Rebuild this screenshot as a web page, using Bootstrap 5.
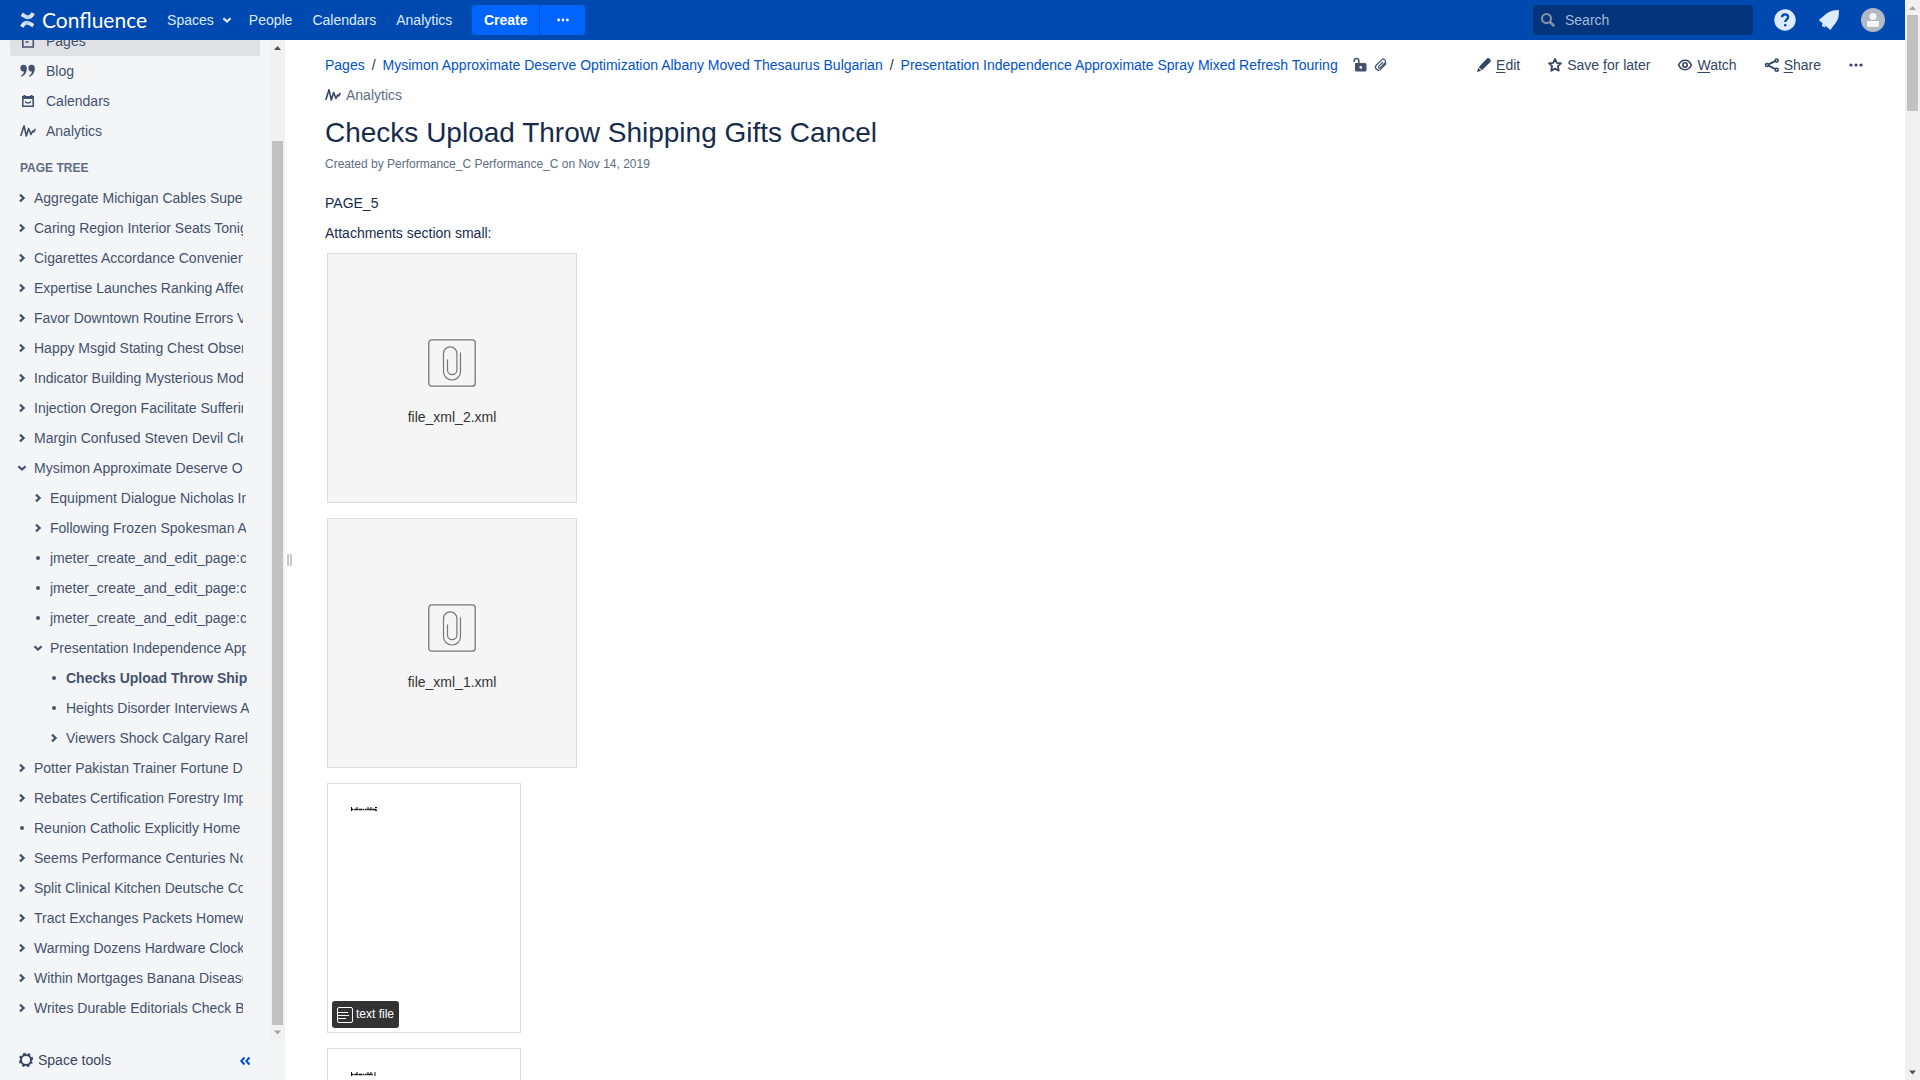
<!DOCTYPE html>
<html lang="en">
<head>
<meta charset="utf-8">
<meta name="viewport" content="width=device-width, initial-scale=1">
<title>Checks Upload Throw Shipping Gifts Cancel - Confluence</title>
<link rel="stylesheet" href="https://cdn.jsdelivr.net/npm/bootstrap@5.3.0/dist/css/bootstrap.min.css">
<style>
body{font-family:"Liberation Sans",Arial,sans-serif;font-size:14px;line-height:20px;color:#172b4d;background:#fff}
a{color:#0052cc;text-decoration:none}
svg{display:block;flex:none}
u{text-underline-offset:2px}
.app-bar{height:40px;background:#0049b0;padding:0 20px;color:#deebff}
.app-bar a{color:#deebff}
.brand{gap:7px}
.brand-name{font-family:Lato,"Open Sans",sans-serif;font-size:21px;line-height:30px;color:#fff}
.app-nav{gap:20px;margin-left:20px}
.app-nav .menu-link{gap:5px;margin-right:-6px}
.app-bar .btn{height:30px;border:0;padding:0 10px;background:#0065ff;color:#fff;font-size:14px;line-height:20px;font-weight:700}
.app-bar .btn-create{width:67px;border-radius:3px 0 0 3px}
.app-bar .btn-more{width:45px;border-radius:0 3px 3px 0}
.search-box{width:220px;height:30px;background:#03347c;border-radius:3px;padding:0 8px;gap:10px;margin-right:20px}
.search-box input{background:none;border:0;outline:0;padding:0;color:#b3c7e6;min-width:0}
.search-box input::placeholder{color:#a5bad9;opacity:1}
.bar-icons{gap:21px}
.icon-btn{background:none;border:0;padding:0;color:inherit}
.side{width:285px;background:#f4f5f7;color:#42526e}
.side a{color:#42526e}
.side-scroll{padding:0 10px 17px}
.side-link{height:30px;padding:0 10px;gap:10px;border-radius:3px}
.side-link.current{background:#dfe1e5}
.tree-title{font-size:12px;line-height:20px;font-weight:700;color:#5e6c84;padding:12px 10px 5px;margin:0}
.tree,.tree ul{list-style:none;margin:0;padding:0}
.tree{padding:0 17px 0 4px}
.tree ul{padding-left:16px;margin-right:-3px}
.tree-row{height:30px;gap:4px}
.tree-row .name{white-space:nowrap;overflow:hidden;flex:1;min-width:0}
.tree-row button{width:16px;height:16px}
.side-foot{height:40px;padding:0 34px 0 18px}
.side .space-tools{gap:4px;color:#344563}
.collapse-btn{color:#0052cc}
.sbar{width:15px;background:#f1f1f1}
.sbar .arrow{height:15px}
.sbar .thumb{background:#c1c1c1;margin:0 2px}
.grip{width:9px;gap:1px}
.grip i{width:2px;height:12px;background:#c1c7d0}
.shrinkable{min-width:0;min-height:0}
.page-main{padding:10px 41px 0 31px}
.crumbs{font-size:14px;line-height:30px;margin:0;--bs-breadcrumb-item-padding-x:7px;--bs-breadcrumb-divider-color:#333;color:#42526e}
.crumbs li+li::before{padding-right:5px}
.crumb-icons{gap:5px;margin-left:14px;color:#42526e}
.tools{gap:27px;height:30px;color:#344563}
.tools a{color:#344563;gap:4px}
.meta-link{height:30px;color:#5e6c84;gap:5px}
.page-title{font-size:28px;line-height:34px;font-weight:400;margin:6px 0 4px}
.byline{font-size:12px;line-height:20px;color:#5e6c84;margin:0 0 19px}
.body-text p{margin:0 0 10px}
.files{gap:15px;padding-left:2px}
.file-box{height:250px;border:1px solid #ddd;flex:none}
.file-box.unknown{width:250px;background:#f5f5f5;color:#333}
.file-box.preview{width:194px;padding:23px 4px 4px}
.file-box .glyph{margin:10px 0 20px}
.type-tag{background:#333;color:#fff;font-size:12px;line-height:27px;height:27px;border-radius:3px;padding:0 5px;gap:3px}
.preview .sample{margin-left:19px}
</style>
<script src="https://cdn.jsdelivr.net/npm/bootstrap@5.3.0/dist/js/bootstrap.bundle.min.js"></script>
</head>
<body>
<svg width="0" height="0" class="position-absolute" aria-hidden="true">
<defs>
<symbol id="i-right" viewBox="0 0 16 16"><path d="M6 4.600 9.600 8 6 11.400" fill="none" stroke="currentColor" stroke-width="2.200"/></symbol>
<symbol id="i-down" viewBox="0 0 16 16"><path d="M4.400 6.200 8 9.600l3.600-3.400" fill="none" stroke="currentColor" stroke-width="2.200"/></symbol>
<symbol id="i-dot" viewBox="0 0 16 16"><circle cx="8" cy="8" r="2" fill="currentColor"/></symbol>
<symbol id="i-more" viewBox="0 0 16 16"><g fill="currentColor"><circle cx="3" cy="8" r="1.600"/><circle cx="8" cy="8" r="1.600"/><circle cx="13" cy="8" r="1.600"/></g></symbol>
<symbol id="i-wave" viewBox="0 0 16 16"><path d="M1 12.300 4 2.800 6.300 13 8.600 5.500 11 11.500 12.600 8 13.600 9 15 6.500" fill="none" stroke="currentColor" stroke-width="1.600" stroke-linejoin="round" stroke-linecap="round"/></symbol>
<symbol id="i-clipbox" viewBox="0 0 48 48"><g fill="none" stroke="#777"><rect x=".8" y=".8" width="46.400" height="46.400" rx="3" stroke-width="1.300"/><path d="M32.500 13.500v19a8.500 8.500 0 0 1-17 0V14.500a6.700 6.700 0 0 1 13.400 0V31a4.700 4.700 0 0 1-9.400 0V20.500" stroke-width="1.200"/></g></symbol>
<symbol id="i-up-arrow" viewBox="0 0 15 15"><path d="M7.500 6 11 10H4z" fill="currentColor"/></symbol>
<symbol id="i-down-arrow" viewBox="0 0 15 15"><path d="M7.500 9.500 11 5.500H4z" fill="currentColor"/></symbol>
</defs>
</svg>
<div class="d-flex vh-100 overflow-hidden">
<div class="shrinkable d-flex flex-column flex-fill">
<header class="app-bar d-flex align-items-center flex-shrink-0">
  <a href="#" class="brand d-flex align-items-center">
    <svg width="15" height="16" viewBox="0 0 15 16"><defs><linearGradient id="g1"><stop offset="0" stop-color="#fff"/><stop offset=".5" stop-color="#b5cdf0"/><stop offset="1" stop-color="#fff"/></linearGradient></defs><path d="M.8 3.900 2.600.8C5 2 7 3.400 8.300 3.200 9.800 3 10.600 1.700 11.400.3l3.400 1.700C13.200 5 11.200 7.400 8 7.200 5.500 7.100 3 5.200.8 3.900z" fill="url(#g1)"/><path d="M14.200 12.100l-1.800 3.100C10 14 8 12.600 6.700 12.800 5.200 13 4.400 14.300 3.600 15.700L.2 14C1.800 11 3.800 8.600 7 8.800c2.500.1 5 2 7.200 3.300z" fill="url(#g1)"/></svg>
    <span class="brand-name">Confluence</span>
  </a>
  <nav class="app-nav d-flex align-items-center">
    <a href="#" class="menu-link d-flex align-items-center">Spaces <svg width="16" height="16"><use href="#i-down"/></svg></a>
    <a href="#">People</a><a href="#">Calendars</a><a href="#">Analytics</a>
    <div class="d-flex" style="gap:1px"><button class="btn btn-create">Create</button><button class="btn btn-more d-flex align-items-center justify-content-center" aria-label="More create options"><svg width="14" height="14"><use href="#i-more"/></svg></button></div>
  </nav>
  <div class="d-flex align-items-center ms-auto">
    <label class="search-box d-flex align-items-center"><svg width="14" height="14" viewBox="0 0 14 14" fill="none" stroke="#8592a5" stroke-width="2"><circle cx="5.500" cy="5.500" r="4.500"/><path d="M9 9l4.200 4.200" stroke-width="2.600"/></svg><input type="text" placeholder="Search" aria-label="Search"></label>
    <div class="bar-icons d-flex align-items-center">
    <button class="icon-btn" aria-label="Help"><svg width="24" height="24" viewBox="0 0 24 24"><circle cx="12" cy="12" r="10.700" fill="#deebff"/><path d="M9 9.300c0-2 1.300-3 3.100-3s3 1 3 2.700c0 2.500-2.800 2.400-2.800 5" fill="none" stroke="#0049b0" stroke-width="2.300"/><rect x="11" y="16" width="2.500" height="2.500" rx="1" fill="#0049b0"/></svg></button>
    <button class="icon-btn" aria-label="Notifications"><svg width="22" height="24" viewBox="0 0 22 24" fill="#deebff"><path d="M.8 12 9 5.300C12.500 2.700 16.500 1.900 20.800 2c.5 5-.3 9-2.800 12.500L12.300 22z"/><path d="M4.500 15.300 7.800 18.300c-1.500 2.200-5 .2-3.300-3z"/></svg></button>
    <button class="icon-btn" aria-label="User menu"><svg width="24" height="24" viewBox="0 0 24 24"><circle cx="12" cy="12" r="12" fill="#b3bac5"/><circle cx="12" cy="8.500" r="3.600" fill="#f4f5f7"/><path d="M6 13h12v4.500c0 1-1 1.600-2 1.600H8c-1 0-2-.6-2-1.600z" fill="#f4f5f7"/></svg></button>
    </div>
  </div>
</header>
<div class="shrinkable d-flex flex-fill">
<aside class="side d-flex flex-column flex-shrink-0">
  <div class="shrinkable d-flex flex-fill">
    <div class="side-scroll shrinkable d-flex flex-column justify-content-end flex-fill overflow-hidden">
      <nav>
        <a href="#" class="side-link current d-flex align-items-center"><svg width="16" height="16" viewBox="0 0 16 16" fill="none" stroke="currentColor" stroke-width="1.600"><path d="M5 2h6.500L13.300 3.500V14H2.800V2z"/><path d="M5.500 6h5M5.500 9h3" stroke-width="1.400"/></svg>Pages</a>
        <a href="#" class="side-link d-flex align-items-center"><svg width="16" height="16" viewBox="0 0 16 16" fill="currentColor"><path id="q" d="M3.500 1.800A3.200 3.200 0 0 1 6.800 5.500c0 4-2 7.200-5.400 8.300l-.5-1c1.800-1 2.900-2.400 3.100-4.300A3.300 3.300 0 1 1 3.500 1.800z"/><use href="#q" x="8"/></svg>Blog</a>
        <a href="#" class="side-link d-flex align-items-center"><svg width="16" height="16" viewBox="0 0 16 16" fill="none" stroke="currentColor"><path d="M2.800 4h10.400v9.200H2.800z" stroke-width="1.600"/><path d="M2 4.500h12" stroke-width="3"/><path d="M4.500 2v2m7-2v2" stroke-width="2"/><path d="M5 8.500c1.500 2 4.500 2 6 0" stroke-width="1.300"/></svg>Calendars</a>
        <a href="#" class="side-link d-flex align-items-center"><svg width="16" height="16"><use href="#i-wave"/></svg>Analytics</a>
      </nav>
      <h2 class="tree-title">PAGE TREE</h2>
      <ul class="tree" id="tree"></ul>
    </div>
    <div class="sbar d-flex flex-column flex-shrink-0" aria-hidden="true">
      <svg class="arrow" width="15" height="15" color="#505050"><use href="#i-up-arrow"/></svg>
      <div style="flex:86"></div><div class="thumb" style="flex:884"></div>
      <svg class="arrow" width="15" height="15" color="#a3a3a3"><use href="#i-down-arrow"/></svg>
    </div>
  </div>
  <div class="side-foot d-flex align-items-center justify-content-between flex-shrink-0">
    <a href="#" class="space-tools d-flex align-items-center"><svg width="16" height="16" viewBox="0 0 16 16" fill="none" stroke="currentColor"><circle cx="8" cy="8" r="5" stroke-width="2"/><circle cx="8" cy="8" r="6.300" stroke-width="1.800" stroke-dasharray="2.600 2.348" stroke-dashoffset="1.300" transform="rotate(22.500 8 8)"/></svg>Space tools</a>
    <button class="icon-btn collapse-btn" aria-label="Collapse sidebar"><svg width="12" height="16" viewBox="0 0 12 16" fill="none" stroke="currentColor" stroke-width="2"><path d="M5.500 5.500 2.300 9l3.200 3.500M10.500 5.500 7.300 9l3.200 3.500"/></svg></button>
  </div>
</aside>
<div class="grip d-flex align-items-center justify-content-center flex-shrink-0" aria-hidden="true"><i></i><i></i></div>
<main class="page-main shrinkable flex-fill overflow-hidden">
  <div class="d-flex justify-content-between">
    <div class="d-flex align-items-center">
      <ol class="breadcrumb crumbs">
        <li class="breadcrumb-item"><a href="#">Pages</a></li>
        <li class="breadcrumb-item"><a href="#">Mysimon Approximate Deserve Optimization Albany Moved Thesaurus Bulgarian</a></li>
        <li class="breadcrumb-item"><a href="#">Presentation Independence Approximate Spray Mixed Refresh Touring</a></li>
      </ol>
      <div class="crumb-icons d-flex">
        <button class="icon-btn" aria-label="Restrictions"><svg width="16" height="16" viewBox="0 0 16 16"><path d="M2.200 5V3.800a2.300 2.300 0 0 1 4.600 0V7" fill="none" stroke="currentColor" stroke-width="1.600"/><path fill-rule="evenodd" d="M4 6h9a1.500 1.500 0 0 1 1.500 1.500V13a1.500 1.500 0 0 1-1.500 1.500H4.500A1.500 1.500 0 0 1 3 13V6zm4.800 3a1.400 1.400 0 1 0 0 2.800 1.400 1.400 0 0 0 0-2.800z" fill="currentColor"/></svg></button>
        <button class="icon-btn" aria-label="Attachments"><svg width="16" height="16" viewBox="0 0 16 16"><path d="M13.300 6.300 7.800 12.200a3 3 0 0 1-4.400-4.200L8.700 2.900a2.200 2.200 0 0 1 3.200 3.100L7.300 10.700c-1.300 1-2.500-.3-1.500-1.500L10 5" fill="none" stroke="currentColor" stroke-width="1.200"/></svg></button>
      </div>
    </div>
    <div class="tools d-flex align-items-center">
      <a href="#" class="d-flex align-items-center"><svg width="16" height="16" viewBox="0 0 16 16" fill="currentColor"><path d="M10.700 1.800c1-1 2-.8 2.900 0l.8.800c.7.900.6 1.600-.1 2.400L6 13.200 2.800 10z"/><path d="M2.200 10.800 5.200 13.800 1 15z"/></svg><span><u>E</u>dit</span></a>
      <a href="#" class="d-flex align-items-center"><svg width="16" height="16" viewBox="0 0 16 16" fill="none" stroke="currentColor" stroke-width="1.800" stroke-linejoin="round"><path d="M8 2l1.800 3.800 4.200.5-3.100 2.900.8 4.500L8 11.600l-3.700 2.100.8-4.500L2 6.300l4.200-.5z"/></svg><span>Save <u>f</u>or later</span></a>
      <a href="#" class="d-flex align-items-center"><svg width="16" height="16" viewBox="0 0 16 16" fill="none" stroke="currentColor" stroke-width="1.600"><path d="M1.600 8C3 5 5.200 3.300 8 3.300S13 5 14.400 8C13 11 10.800 12.700 8 12.700S3 11 1.600 8z"/><circle cx="8" cy="8" r="2.200"/></svg><span><u>W</u>atch</span></a>
      <a href="#" class="d-flex align-items-center"><svg width="16" height="16" viewBox="0 0 16 16" fill="none" stroke="currentColor" stroke-width="1.600"><circle cx="3" cy="8" r="1.500"/><circle cx="12.700" cy="3.500" r="1.500"/><circle cx="12.700" cy="12.700" r="1.500"/><path d="M4.500 7.300 11.200 4.200M4.500 8.700l6.700 3.300" stroke-width="1.900"/></svg><span><u>S</u>hare</span></a>
      <button class="icon-btn" aria-label="More actions"><svg width="16" height="16"><use href="#i-more"/></svg></button>
    </div>
  </div>
  <a href="#" class="meta-link d-flex align-items-center"><svg width="16" height="16" color="#344563"><use href="#i-wave"/></svg>Analytics</a>
  <h1 class="page-title">Checks Upload Throw Shipping Gifts Cancel</h1>
  <p class="byline">Created by Performance_C Performance_C on Nov 14, 2019</p>
  <div class="body-text">
    <p>PAGE_5</p>
    <p>Attachments section small:</p>
    <div class="files d-flex flex-column">
      <div class="file-box unknown d-flex flex-column align-items-center justify-content-center"><svg class="glyph" width="48" height="48"><use href="#i-clipbox"/></svg>file_xml_2.xml</div>
      <div class="file-box unknown d-flex flex-column align-items-center justify-content-center"><svg class="glyph" width="48" height="48"><use href="#i-clipbox"/></svg>file_xml_1.xml</div>
      <div class="file-box preview d-flex flex-column align-items-start justify-content-between">
        <svg class="sample" width="27" height="4" viewBox="0 0 27 4" fill="none" stroke="#111"><path d="M0 2.500h26" stroke-width="1.600" stroke-dasharray="2 .5 1 .3 3 .6 4 .5 1 .8"/><path d="M.5 0v4M6 0v3M17 0v3M20 0v3M24 .5h2M24 3.500h2"/></svg>
        <div class="type-tag d-flex align-items-center"><svg width="16" height="16" viewBox="0 0 16 16" fill="none" stroke="#fff"><rect x=".5" y=".5" width="15" height="15" rx="1.500"/><path d="M1 5.500h10M1 8.500h11M1 11.500h8"/></svg>text file</div>
      </div>
      <div class="file-box preview d-flex flex-column align-items-start justify-content-between">
        <svg class="sample" width="27" height="4" viewBox="0 0 27 4" fill="none" stroke="#111"><path d="M0 2.500h22" stroke-width="1.600" stroke-dasharray="2 .5 1 .3 3 .6 4 .5 1 .8"/><path d="M.5 0v4M6 0v3M17 0v3M20 0v3M24 0v4"/></svg>
      </div>
    </div>
  </div>
</main>
</div>
</div>
<div class="sbar d-flex flex-column flex-shrink-0" aria-hidden="true">
  <svg class="arrow" width="15" height="15" color="#a3a3a3"><use href="#i-up-arrow"/></svg>
  <div class="thumb" style="flex:96"></div><div style="flex:954"></div>
  <svg class="arrow" width="15" height="15" color="#505050"><use href="#i-down-arrow"/></svg>
</div>
</div>
<script>
// Each entry: [marker, title, children, is current page]
const pages = [
  ['right','Aggregate Michigan Cables Supe'],
  ['right','Caring Region Interior Seats Tonig'],
  ['right','Cigarettes Accordance Convenien'],
  ['right','Expertise Launches Ranking Affec'],
  ['right','Favor Downtown Routine Errors V'],
  ['right','Happy Msgid Stating Chest Obser'],
  ['right','Indicator Building Mysterious Mod'],
  ['right','Injection Oregon Facilitate Sufferin'],
  ['right','Margin Confused Steven Devil Cle'],
  ['down','Mysimon Approximate Deserve O',[
    ['right','Equipment Dialogue Nicholas In'],
    ['right','Following Frozen Spokesman A'],
    ['dot','jmeter_create_and_edit_page:c'],
    ['dot','jmeter_create_and_edit_page:c'],
    ['dot','jmeter_create_and_edit_page:c'],
    ['down','Presentation Independence App',[
      ['dot','Checks Upload Throw Ship',null,true],
      ['dot','Heights Disorder Interviews A'],
      ['right','Viewers Shock Calgary Rarel']
    ]]
  ]],
  ['right','Potter Pakistan Trainer Fortune D'],
  ['right','Rebates Certification Forestry Imp'],
  ['dot','Reunion Catholic Explicitly Home'],
  ['right','Seems Performance Centuries No'],
  ['right','Split Clinical Kitchen Deutsche Co'],
  ['right','Tract Exchanges Packets Homew'],
  ['right','Warming Dozens Hardware Clock'],
  ['right','Within Mortgages Banana Disease'],
  ['right','Writes Durable Editorials Check B']
];
const draw = list => list.map(([m, t, kids, cur]) => {
  const icon = `<svg width="16" height="16"><use href="#i-${m}"/></svg>`;
  const mark = m === 'dot' ? icon : `<button class="icon-btn d-flex" aria-label="Toggle ${t}">${icon}</button>`;
  return `<li><div class="tree-row d-flex align-items-center">${mark}<a href="#" class="name${cur ? ' fw-bold' : ''}">${t}</a></div>${kids ? `<ul>${draw(kids)}</ul>` : ''}</li>`;
}).join('');
document.getElementById('tree').innerHTML = draw(pages);
</script>
</body>
</html>
